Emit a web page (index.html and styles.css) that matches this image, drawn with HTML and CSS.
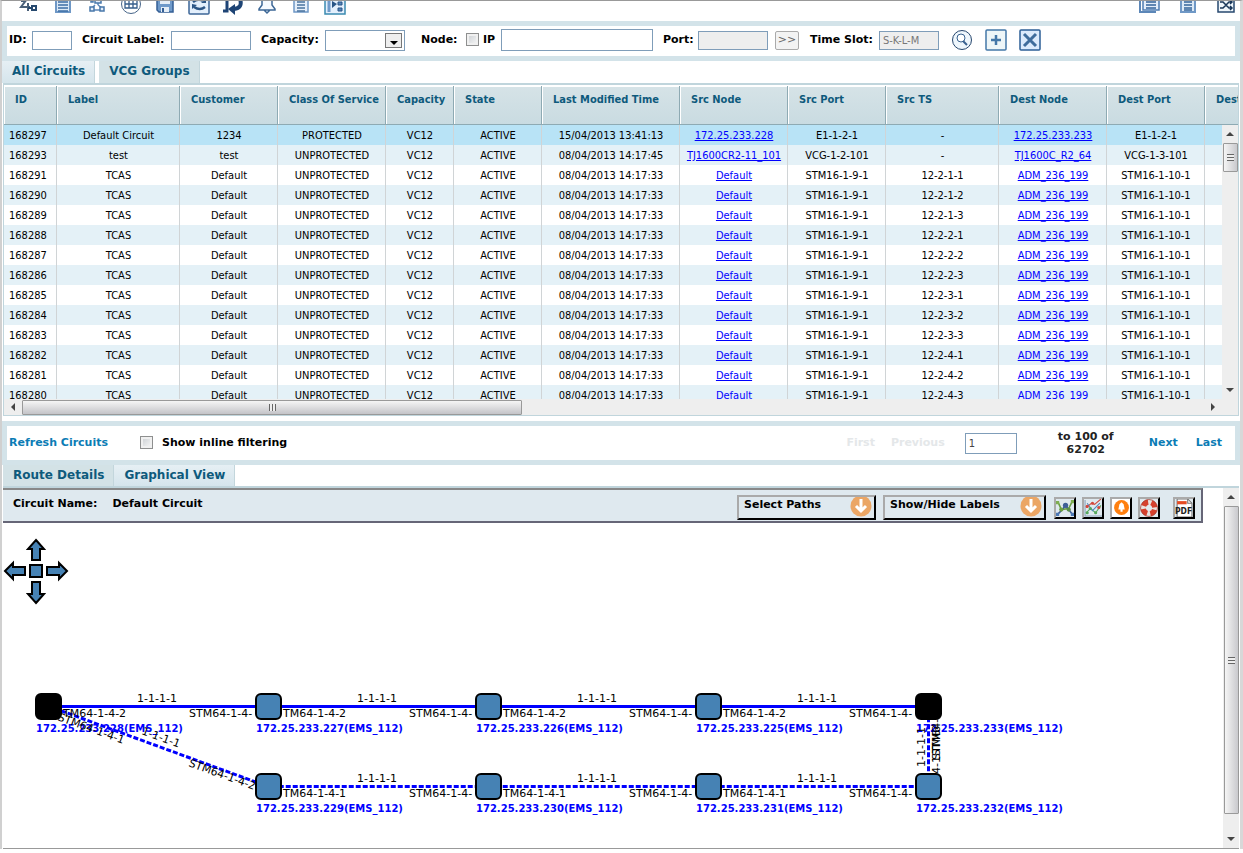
FILE: index.html
```
<!DOCTYPE html>
<html lang="en">
<head>
<meta charset="utf-8">
<title>Circuits</title>
<link rel="stylesheet" href="styles.css">
</head>
<body>
<div class="app">
  <nav class="toolbar" aria-label="Tools">
    <button class="tool" aria-label="Ports"><svg viewBox="0 0 22 16"><path d="M3 0H6L8 -2M9 -2L3 6H12M10 2V10" fill="none" stroke="#4a6078" stroke-width="2"/><path d="M14 5H18V9H14ZM10 7H14" fill="none" stroke="#27496f" stroke-width="2"/></svg></button>
    <button class="tool" aria-label="Circuit list"><svg viewBox="0 0 22 16"><path d="M4 -2H18V11H4Z" fill="#dce9f6" stroke="#6f98c6" stroke-width="2"/><path d="M6 1H16M6 4H16M6 7H16M6 10H16" stroke="#3d6ea5" stroke-width="1.5"/></svg></button>
    <button class="tool" aria-label="Topology"><svg viewBox="0 0 22 16"><path d="M12 0V4M9 4L6 7M12 4L16 7M7 9H14" fill="none" stroke="#5c87b8" stroke-width="1.5"/><path d="M9 -3H15V2H9ZM4 6H8V10H4ZM14 6H18V10H14ZM5 -1H7V1H5Z" fill="#e4eefa" stroke="#4878ab" stroke-width="1.5"/></svg></button>
    <button class="tool" aria-label="Table"><svg viewBox="0 0 22 16"><circle cx="11" cy="3" r="9.500" fill="#fff" stroke="#456488"/><path d="M5 -1H17V7H5ZM5 3H17M9 -1V7M13 -1V7" fill="none" stroke="#365d8b" stroke-width="1.300"/></svg></button>
    <button class="tool" aria-label="Save"><svg viewBox="0 0 22 16"><path d="M3 -2H19V11H5L3 9Z" fill="#6f9aca" stroke="#355f95" stroke-width="1.5"/><path d="M6 -1H16V3H6ZM7 6H15V11H7Z" fill="#e5eef7"/><path d="M9 7V11" stroke="#355f95" stroke-width="2"/></svg></button>
    <button class="tool" aria-label="Refresh"><svg viewBox="0 0 22 16"><rect x="1" y="-6" width="20" height="19" rx="1" fill="#e3effc" stroke="#3d6697" stroke-width="1.5"/><path d="M5 1Q10 -3 15 0M6 6Q12 10 17 6" fill="none" stroke="#2c5686" stroke-width="2.500"/><path d="M13 2L18 2L18 -2ZM4 3V8L9 4Z" fill="#2c5686"/></svg></button>
    <button class="tool" aria-label="Reroute"><svg viewBox="0 0 22 16"><path d="M1 10H5V-1" fill="none" stroke="#1e4475" stroke-width="3"/><path d="M18 -2Q21 7 12 8" fill="none" stroke="#1e4475" stroke-width="4"/><path d="M13 3V14L6 8Z" fill="#1e4475"/></svg></button>
    <button class="tool" aria-label="Alarms"><svg viewBox="0 0 22 16"><path d="M6 -2V4L3 8V9H19V8L16 4V-2M8 9L11 12L14 9" fill="#f6faff" stroke="#3c6796" stroke-width="1.5"/></svg></button>
    <button class="tool" aria-label="Log"><svg viewBox="0 0 22 16"><path d="M4 -2H18V11H4Z" fill="#e4eefa" stroke="#6f98c6" stroke-width="1.5"/><path d="M7 1H15M7 4H15M7 7H15M7 10H15" stroke="#48739f" stroke-width="1.5"/></svg></button>
    <button class="tool" aria-label="Tree"><svg viewBox="0 0 22 16"><rect x="1" y="-6" width="20" height="19" fill="#e3effc" stroke="#3a8ab0" stroke-width="1.5"/><path d="M5 -1V11" stroke="#6f9aca" stroke-width="3"/><path d="M8 0V7L13 3Z" fill="#285586"/><path d="M14 1H18V4H14ZM14 7H18V10H14Z" fill="#5484b9" stroke="#285586"/></svg></button>
    <span class="grow"></span>
    <button class="tool wide" aria-label="Copies"><svg viewBox="0 0 22 16"><path d="M1 -1V11H17" fill="none" stroke="#5c87b8" stroke-width="2"/><path d="M4 -2H20V9H4Z" fill="#e4eefa" stroke="#4f7db2" stroke-width="1.5"/><path d="M7 1H17M7 4H17M7 7H17" stroke="#33649a" stroke-width="1.5"/></svg></button>
    <button class="tool wide" aria-label="Report"><svg viewBox="0 0 22 16"><path d="M4 -2H18V11H4Z" fill="#dce9f6" stroke="#6f98c6" stroke-width="2"/><path d="M7 1H15M7 4H15M7 7H15M7 9H15" stroke="#33649a" stroke-width="1.5"/></svg></button>
    <button class="tool" aria-label="Shuffle"><svg viewBox="0 0 22 16"><path d="M3 -2V11H19V-2" fill="#eef5fb" stroke="#27486f" stroke-width="1.5"/><path d="M5 1H8L14 7H17M5 7H8L14 1H17M15 -1L17 1L15 3M15 5L17 7L15 9" fill="none" stroke="#173558" stroke-width="1.5"/></svg></button>
  </nav>

  <form class="panel filter">
    <label for="f-id" class="w-id">ID:</label><input id="f-id" class="field f-40" type="text">
    <label for="f-label" class="w-label">Circuit Label:</label><input id="f-label" class="field f-80" type="text">
    <label for="f-cap" class="w-cap">Capacity:</label>
    <span class="select-wrap"><select id="f-cap" class="field"><option></option></select><svg class="select-btn" viewBox="0 0 17 15" aria-hidden="true"><rect x=".5" y=".5" width="16" height="14" fill="#eee" stroke="#777"/><path d="M5 8H13L9 12Z" fill="#000"/></svg></span>
    <span class="w-node">Node:</span><input id="f-ip-on" class="check" type="checkbox"><label for="f-ip-on" class="w-ip">IP</label><input class="field f-ip" type="text" aria-label="IP address">
    <label for="f-port" class="w-port">Port:</label><input id="f-port" class="field f-70 off" type="text" disabled>
    <button type="button" class="more">&gt;&gt;</button>
    <label for="f-ts" class="w-ts">Time Slot:</label><input id="f-ts" class="field f-60 off" type="text" value="S-K-L-M" disabled>
    <button type="button" class="action" aria-label="Search"><svg viewBox="0 0 22 22"><circle cx="11" cy="11" r="9.500" fill="#eef6fc" stroke="#26466d"/><circle cx="10" cy="9" r="4" fill="#fff" stroke="#38618f"/><path d="M12 12L16 16" stroke="#38618f" stroke-width="2"/></svg></button>
    <button type="button" class="action" aria-label="Add"><svg viewBox="0 0 22 22"><rect x="1" y="1" width="20" height="20" rx="1" fill="#eef6f8" stroke="#4478a8" stroke-width="1.500"/><path d="M11 6V16M6 11H16" stroke="#4478a8" stroke-width="2.500"/></svg></button>
    <button type="button" class="action" aria-label="Clear"><svg viewBox="0 0 22 22"><rect x="1" y="1" width="20" height="20" rx="1" fill="#dceafc" stroke="#2d5f96" stroke-width="1.500"/><path d="M5 5L17 17M17 5L5 17" stroke="#3f6c9c" stroke-width="3"/></svg></button>
  </form>

  <div class="tabs" role="tablist">
    <button class="tab current" role="tab" aria-selected="true">All Circuits</button>
    <button class="tab spaced" role="tab" aria-selected="false">VCG Groups</button>
  </div>

  <section class="grid">
    <div class="grid-view">
      <table>
        <colgroup><col class="c53"><col class="c123"><col class="c98"><col class="c108"><col class="c68"><col class="c88"><col class="c138"><col class="c108"><col class="c98"><col class="c113"><col class="c108"><col class="c98"><col class="c113"></colgroup>
        <thead><tr><th>ID</th><th>Label</th><th>Customer</th><th>Class Of Service</th><th>Capacity</th><th>State</th><th>Last Modified Time</th><th>Src Node</th><th>Src Port</th><th>Src TS</th><th>Dest Node</th><th>Dest Port</th><th>Dest TS</th></tr></thead>
        <tbody>
        <tr class="selected"><td>168297</td><td>Default Circuit</td><td>1234</td><td>PROTECTED</td><td>VC12</td><td>ACTIVE</td><td>15/04/2013 13:41:13</td><td><a href="#">172.25.233.228</a></td><td>E1-1-2-1</td><td>-</td><td><a href="#">172.25.233.233</a></td><td>E1-1-2-1</td><td></td></tr>
        <tr><td>168293</td><td>test</td><td>test</td><td>UNPROTECTED</td><td>VC12</td><td>ACTIVE</td><td>08/04/2013 14:17:45</td><td><a href="#">TJ1600CR2-11_101</a></td><td>VCG-1-2-101</td><td>-</td><td><a href="#">TJ1600C_R2_64</a></td><td>VCG-1-3-101</td><td></td></tr>
        <tr><td>168291</td><td>TCAS</td><td>Default</td><td>UNPROTECTED</td><td>VC12</td><td>ACTIVE</td><td>08/04/2013 14:17:33</td><td><a href="#">Default</a></td><td>STM16-1-9-1</td><td>12-2-1-1</td><td><a href="#">ADM_236_199</a></td><td>STM16-1-10-1</td><td></td></tr>
        <tr><td>168290</td><td>TCAS</td><td>Default</td><td>UNPROTECTED</td><td>VC12</td><td>ACTIVE</td><td>08/04/2013 14:17:33</td><td><a href="#">Default</a></td><td>STM16-1-9-1</td><td>12-2-1-2</td><td><a href="#">ADM_236_199</a></td><td>STM16-1-10-1</td><td></td></tr>
        <tr><td>168289</td><td>TCAS</td><td>Default</td><td>UNPROTECTED</td><td>VC12</td><td>ACTIVE</td><td>08/04/2013 14:17:33</td><td><a href="#">Default</a></td><td>STM16-1-9-1</td><td>12-2-1-3</td><td><a href="#">ADM_236_199</a></td><td>STM16-1-10-1</td><td></td></tr>
        <tr><td>168288</td><td>TCAS</td><td>Default</td><td>UNPROTECTED</td><td>VC12</td><td>ACTIVE</td><td>08/04/2013 14:17:33</td><td><a href="#">Default</a></td><td>STM16-1-9-1</td><td>12-2-2-1</td><td><a href="#">ADM_236_199</a></td><td>STM16-1-10-1</td><td></td></tr>
        <tr><td>168287</td><td>TCAS</td><td>Default</td><td>UNPROTECTED</td><td>VC12</td><td>ACTIVE</td><td>08/04/2013 14:17:33</td><td><a href="#">Default</a></td><td>STM16-1-9-1</td><td>12-2-2-2</td><td><a href="#">ADM_236_199</a></td><td>STM16-1-10-1</td><td></td></tr>
        <tr><td>168286</td><td>TCAS</td><td>Default</td><td>UNPROTECTED</td><td>VC12</td><td>ACTIVE</td><td>08/04/2013 14:17:33</td><td><a href="#">Default</a></td><td>STM16-1-9-1</td><td>12-2-2-3</td><td><a href="#">ADM_236_199</a></td><td>STM16-1-10-1</td><td></td></tr>
        <tr><td>168285</td><td>TCAS</td><td>Default</td><td>UNPROTECTED</td><td>VC12</td><td>ACTIVE</td><td>08/04/2013 14:17:33</td><td><a href="#">Default</a></td><td>STM16-1-9-1</td><td>12-2-3-1</td><td><a href="#">ADM_236_199</a></td><td>STM16-1-10-1</td><td></td></tr>
        <tr><td>168284</td><td>TCAS</td><td>Default</td><td>UNPROTECTED</td><td>VC12</td><td>ACTIVE</td><td>08/04/2013 14:17:33</td><td><a href="#">Default</a></td><td>STM16-1-9-1</td><td>12-2-3-2</td><td><a href="#">ADM_236_199</a></td><td>STM16-1-10-1</td><td></td></tr>
        <tr><td>168283</td><td>TCAS</td><td>Default</td><td>UNPROTECTED</td><td>VC12</td><td>ACTIVE</td><td>08/04/2013 14:17:33</td><td><a href="#">Default</a></td><td>STM16-1-9-1</td><td>12-2-3-3</td><td><a href="#">ADM_236_199</a></td><td>STM16-1-10-1</td><td></td></tr>
        <tr><td>168282</td><td>TCAS</td><td>Default</td><td>UNPROTECTED</td><td>VC12</td><td>ACTIVE</td><td>08/04/2013 14:17:33</td><td><a href="#">Default</a></td><td>STM16-1-9-1</td><td>12-2-4-1</td><td><a href="#">ADM_236_199</a></td><td>STM16-1-10-1</td><td></td></tr>
        <tr><td>168281</td><td>TCAS</td><td>Default</td><td>UNPROTECTED</td><td>VC12</td><td>ACTIVE</td><td>08/04/2013 14:17:33</td><td><a href="#">Default</a></td><td>STM16-1-9-1</td><td>12-2-4-2</td><td><a href="#">ADM_236_199</a></td><td>STM16-1-10-1</td><td></td></tr>
        <tr><td>168280</td><td>TCAS</td><td>Default</td><td>UNPROTECTED</td><td>VC12</td><td>ACTIVE</td><td>08/04/2013 14:17:33</td><td><a href="#">Default</a></td><td>STM16-1-9-1</td><td>12-2-4-3</td><td><a href="#">ADM_236_199</a></td><td>STM16-1-10-1</td><td></td></tr>
        </tbody>
      </table>
      <div class="vbar over" aria-hidden="true"><i class="arrow up"></i><div class="vthumb short"><i class="grip"></i></div><span class="grow"></span><i class="arrow down"></i></div>
    </div>
    <div class="hbar" aria-hidden="true"><i class="arrow left"></i><div class="hthumb"><i class="grip upright"></i></div><span class="grow"></span><i class="arrow right"></i></div>
  </section>

  <div class="panel pager">
    <a class="link" href="#">Refresh Circuits</a>
    <input id="inline" class="check" type="checkbox"><label for="inline">Show inline filtering</label>
    <span class="grow"></span>
    <span class="faded">First</span><span class="faded previous">Previous</span>
    <input class="field page" type="text" value="1" aria-label="Page">
    <span class="range">to 100 of 62702</span>
    <a class="link next" href="#">Next</a><a class="link" href="#">Last</a>
  </div>

  <div class="tabs low" role="tablist">
    <button class="tab" role="tab" aria-selected="false">Route Details</button>
    <button class="tab current" role="tab" aria-selected="true">Graphical View</button>
  </div>

  <section class="graph">
    <div class="graph-main">
      <header class="graph-head">
        <span class="name">Circuit Name:</span><span class="name">Default Circuit</span>
        <span class="grow"></span>
        <button class="drop">Select Paths<svg viewBox="0 0 22 20"><circle cx="11" cy="9" r="10.500" fill="#eba665"/><path d="M11 2V13M6 9L11 14L16 9" fill="none" stroke="#fff" stroke-width="3"/></svg></button>
        <button class="drop labels">Show/Hide Labels<svg viewBox="0 0 22 20"><circle cx="11" cy="9" r="10.500" fill="#eba665"/><path d="M11 2V13M6 9L11 14L16 9" fill="none" stroke="#fff" stroke-width="3"/></svg></button>
        <button class="tile" aria-label="Fit"><svg viewBox="0 0 17 17"><path d="M2 3L5 10L12 9L15 3" fill="none" stroke="#6ca044" stroke-width="1.500"/><path d="M2 14L6 10L9 6L12 10L15 14" fill="none" stroke="#3e5f98" stroke-width="1.500"/><circle cx="9" cy="6" r="2.500" fill="#3e5f98"/><circle cx="5" cy="10" r="2" fill="#6ca044"/><circle cx="12" cy="10" r="2" fill="#5b8f4a"/><path d="M0 2H3V5H0ZM14 1H17V4H14Z" fill="#7fae52"/><path d="M0 13H3V16H0ZM14 13H17V16H14Z" fill="#4b79b5"/></svg></button>
        <button class="tile" aria-label="Chart"><svg viewBox="0 0 17 17"><path d="M1 1V16H17" fill="none" stroke="#8ba3b8"/><path d="M2 8L7 4L10 5L16 0" fill="none" stroke="#d3483c"/><path d="M2 13L6 9L11 13L16 6" fill="none" stroke="#56a85c"/><path d="M3 4L8 11L15 4" fill="none" stroke="#4f87bd"/><g fill="#d3483c"><circle cx="3" cy="7" r="1.500"/><circle cx="8" cy="4" r="1.500"/><circle cx="14" cy="8" r="1.500"/></g><g fill="#56a85c"><circle cx="6" cy="9" r="1.500"/><circle cx="11" cy="13" r="1.500"/><circle cx="3" cy="13" r="1.500"/></g></svg></button>
        <button class="tile white" aria-label="Alarms"><svg viewBox="0 0 17 17"><circle cx="9" cy="8" r="7" fill="#ff7f0e"/><path d="M9 3L11 5L12 10H6L7 5ZM8 10H10V12H8Z" fill="#fff"/></svg></button>
        <button class="tile" aria-label="Help"><svg viewBox="0 0 17 17"><circle cx="8.500" cy="8.500" r="5.500" fill="none" stroke="#e8e2df" stroke-width="5"/><circle cx="8.500" cy="8.500" r="5.500" fill="none" stroke="#d5402d" stroke-width="5" stroke-dasharray="5.500 3.139" stroke-dashoffset="7"/><circle cx="8.500" cy="8.500" r="8" fill="none" stroke="#a33c31" stroke-width=".7"/></svg></button>
        <button class="tile pdf" aria-label="Export PDF"><svg viewBox="0 0 17 17"><path d="M2 0H12L16 4V17H2Z" fill="#fff" stroke="#777"/><path d="M12 0V4H16" fill="none" stroke="#777"/><path d="M2 2H11V5H2Z" fill="#e54b22"/><text x="0" y="14" class="pdf-text">PDF</text></svg></button>
      </header>
      <svg class="canvas" role="img" aria-label="Circuit route">
        <g class="pan">
          <path d="M33 17L41 26H37V37H29V26H25ZM33 80L41 71H37V59H29V71H25ZM2 48L10 40V44H22V52H10V56ZM64 48L56 40V44H44V52H56V56ZM27 42H39V54H27Z"/>
        </g>
        <g class="route">
          <path d="M45 183.500H925"/>
          <path class="backup" d="M45 183L265 263.500H925.500V183"/>
        </g>
        <g class="nodes">
          <rect class="end" x="33" y="171" width="25" height="25" rx="5"/><rect x="253" y="171" width="25" height="25" rx="5"/><rect x="473" y="171" width="25" height="25" rx="5"/><rect x="693" y="171" width="25" height="25" rx="5"/><rect class="end" x="913" y="171" width="25" height="25" rx="5"/>
          <rect x="253" y="251" width="25" height="25" rx="5"/><rect x="473" y="251" width="25" height="25" rx="5"/><rect x="693" y="251" width="25" height="25" rx="5"/><rect x="913" y="251" width="25" height="25" rx="5"/>
        </g>
        <g class="ip">
          <text x="33" y="209">172.25.233.228(EMS_112)</text><text x="253" y="209">172.25.233.227(EMS_112)</text><text x="473" y="209">172.25.233.226(EMS_112)</text><text x="693" y="209">172.25.233.225(EMS_112)</text><text x="913" y="209">172.25.233.233(EMS_112)</text>
          <text x="253" y="289">172.25.233.229(EMS_112)</text><text x="473" y="289">172.25.233.230(EMS_112)</text><text x="693" y="289">172.25.233.231(EMS_112)</text><text x="913" y="289">172.25.233.232(EMS_112)</text>
        </g>
        <g class="port">
          <text x="134" y="179">1-1-1-1</text><text x="354" y="179">1-1-1-1</text><text x="574" y="179">1-1-1-1</text><text x="794" y="179">1-1-1-1</text>
          <text x="354" y="259">1-1-1-1</text><text x="574" y="259">1-1-1-1</text><text x="794" y="259">1-1-1-1</text>
          <text x="60" y="194">TM64-1-4-2</text><text x="280" y="194">TM64-1-4-2</text><text x="500" y="194">TM64-1-4-2</text><text x="720" y="194">TM64-1-4-2</text>
          <text x="186" y="194">STM64-1-4-</text><text x="406" y="194">STM64-1-4-</text><text x="626" y="194">STM64-1-4-</text><text x="846" y="194">STM64-1-4-</text>
          <text x="280" y="274">TM64-1-4-1</text><text x="500" y="274">TM64-1-4-1</text><text x="720" y="274">TM64-1-4-1</text>
          <text x="406" y="274">STM64-1-4-</text><text x="626" y="274">STM64-1-4-</text><text x="846" y="274">STM64-1-4-</text>
          <text transform="translate(54 197) rotate(20)">STM64-1-4-1</text><text transform="translate(138 211) rotate(20)">1-1-1-1</text><text transform="translate(185 243) rotate(20)">STM64-1-4-2</text>
          <text transform="translate(922 244) rotate(-90)">1-1-1-1</text><text transform="translate(937 237) rotate(-90)">STM64-</text><text transform="translate(937 251) rotate(-90)">4-1STM6</text>
        </g>
      </svg>
    </div>
    <div class="vbar side" aria-hidden="true"><i class="arrow up"></i><div class="vthumb"><i class="grip"></i></div><i class="arrow down"></i></div>
  </section>
</div>
</body>
</html>
```
FILE: styles.css
```
* { box-sizing: border-box; }
body {
  margin: 0;
  background: #fff;
  color: #000;
  font: bold 11px/14px "DejaVu Sans", Verdana, sans-serif;
}
button, input, select { font: inherit; margin: 0; }
button { padding: 0; border: 0; background: none; color: inherit; }
svg { display: block; }
.app {
  border-top: 1px solid #999;
  border-left: 2px solid #d0d0d0;
  border-right: 3px solid #d8d8d8;
  overflow: hidden;
}
.grow { flex: 1; }

.toolbar { display: flex; height: 20px; padding: 0 3px 0 16px; gap: 12px; overflow: hidden; }
.tool { width: 22px; height: 16px; flex: none; }
.tool svg { width: 22px; height: 16px; }
.wide { margin-right: 4px; }

.panel {
  display: flex;
  align-items: center;
  border: 5px solid #d3e3e9;
  white-space: nowrap;
}
.filter { height: 40px; padding: 0 2px 2px; }
.field {
  height: 19px;
  padding: 0 3px;
  border: 1px solid #7f9db9;
  border-radius: 0;
  background: #fff;
  color: #444;
  font: 11px/14px "DejaVu Sans Condensed", Tahoma, sans-serif;
}
.off { background: #eee; color: #777; }
.f-40 { width: 40px; }
.f-60 { width: 60px; }
.f-70 { width: 70px; }
.f-80 { width: 80px; }
.f-ip { width: 152px; height: 22px; }
.w-id { width: 23px; }
.w-label { width: 99px; padding-left: 10px; }
.w-cap { width: 74px; padding-left: 10px; }
.w-node { width: 61px; padding-left: 16px; }
.w-ip { width: 22px; padding-left: 4px; }
.w-port { width: 45px; padding-left: 10px; }
.w-ts { width: 80px; padding-left: 11px; }
.select-wrap { position: relative; width: 80px; height: 21px; }
.select-wrap select { appearance: none; width: 100%; height: 21px; display: block; }
.select-btn { position: absolute; right: 3px; top: 3px; width: 17px; height: 15px; pointer-events: none; }
.check {
  appearance: none;
  width: 13px;
  height: 13px;
  border: 1px solid #8e8f8f;
  background: linear-gradient(135deg, #c8ccd0, #fafafa);
  box-shadow: inset 0 0 0 2px #f0f0f0;
}
.filter .check { margin-bottom: 2px; }
.more {
  width: 24px;
  height: 19px;
  margin-left: 7px;
  border: 1px solid #aaa;
  border-radius: 2px;
  background: #f3f3f3;
  color: #666;
  font: 11px/14px "DejaVu Sans", sans-serif;
}
.action { width: 22px; height: 22px; margin-left: 12px; }

.tabs { display: flex; height: 22px; }
.tab {
  padding: 0 9px 2px 10px;
  border-right: 1px solid #c3d6dc;
  background: #d3e2e6;
  color: #0e5a7c;
  font-size: 12px;
}
.current { background: linear-gradient(#e6eff4, #d5e5ec); }
.spaced { margin-left: 4px; }
.low { height: 21px; padding-left: 1px; }

.grid { margin: 0 1px 5px; border: 1px solid #c0d5dc; border-top-width: 2px; }
.grid-view { position: relative; height: 314px; padding-top: 1px; overflow: hidden; }
table {
  width: 1314px;
  table-layout: fixed;
  border-collapse: separate;
  border-spacing: 0;
  font: 11px/14px "DejaVu Sans Condensed", Tahoma, sans-serif;
}
.c53 { width: 53px; } .c68 { width: 68px; } .c88 { width: 88px; } .c98 { width: 98px; }
.c108 { width: 108px; } .c113 { width: 113px; } .c123 { width: 123px; } .c138 { width: 138px; }
th {
  height: 39px;
  padding: 7px 0 0 11px;
  vertical-align: top;
  text-align: left;
  white-space: nowrap;
  color: #0e5a7c;
  border: solid #8eaab3;
  border-width: 0 1px 1px 0;
  box-shadow: inset 1px 1px #fff;
  background: linear-gradient(#d6e3e7, #c9dbe1);
}
td {
  height: 20px;
  padding: 2px 0 0 1px;
  text-align: center;
  white-space: nowrap;
  border-right: 1px solid #d0d4d6;
}
td:first-child { padding-left: 5px; text-align: left; }
tr:nth-child(even) td { background: #e4f1f7; }
tr.selected td { background: #b8e3f6; }
td a { color: #00f; }

.vbar { display: flex; flex-direction: column; width: 16px; background: #eee; align-items: center; }
.over { position: absolute; right: 0; top: 40px; bottom: 0; }
.vthumb, .hthumb { display: flex; align-items: center; justify-content: center; border: 1px solid #999; border-radius: 1px; }
.vthumb { flex: 1; width: 15px; background: linear-gradient(90deg, #f5f5f5, #c9c9cd); }
.side .vthumb { margin-bottom: 16px; }
.short { flex: none; height: 29px; }
.hbar { display: flex; align-items: center; height: 16px; background: #eee; }
.hthumb { width: 500px; height: 15px; background: linear-gradient(#f5f5f5, #c4c4c8); }
.hbar .right { margin-right: 16px; }
.grip { width: 7px; height: 7px; background: repeating-linear-gradient(#666 0 1px, #eee 1px 3px); }
.upright { background: repeating-linear-gradient(90deg, #666 0 1px, #eee 1px 3px); }
.arrow { flex: none; width: 18px; height: 18px; display: flex; align-items: center; justify-content: center; }
.arrow::before { content: ""; border: 4px solid transparent; }
.up::before { border-top: 0; border-bottom-color: #444; }
.down::before { border-bottom: 0; border-top-color: #444; }
.left::before { border-left: 0; border-right-color: #444; }
.right::before { border-right: 0; border-left-color: #444; }

.pager { min-height: 44px; padding: 0 13px 0 2px; }
.link { color: #0b7cb5; text-decoration: none; }
.pager .check { margin: 0 9px 2px 32px; }
.faded { margin-right: 16px; color: #e4e7e9; }
.previous { margin-right: 15px; }
.page { width: 52px; height: 21px; margin: 0 29px 0 5px; }
.range { width: 80px; margin-right: 23px; color: #222; text-align: center; white-space: normal; line-height: 13px; }
.next { margin-right: 18px; }

.graph { display: flex; height: 363px; margin: 0 1px; border-top: 2px solid #c0d5dc; border-bottom: 1px solid #999; }
.graph-main { flex: 1; min-width: 0; }
.graph-head {
  display: flex;
  height: 35px;
  margin-right: 20px;
  padding: 5px 6px 0 10px;
  border: solid;
  border-width: 2px 2px 2px 0;
  border-color: #888 #667 #667 #888;
  background: #dfe9ef;
}
.name { margin-right: 15px; padding-top: 2px; }
.drop {
  display: flex;
  justify-content: space-between;
  width: 139px;
  height: 25px;
  margin-right: 7px;
  padding: 1px 2px 0 5px;
  border: 2px solid;
  border-color: #aaa #000 #000 #aaa;
  background: #dfe9ef;
}
.drop svg { width: 22px; height: 20px; margin-top: -1px; }
.labels { width: 163px; margin-right: 8px; }
.tile {
  width: 22px;
  height: 22px;
  margin: 2px 6px 0 0;
  border: 2px solid;
  border-color: #aaa #000 #000 #aaa;
  background: #dfe9ef;
}
.tile svg { width: 18px; height: 18px; }
.white { background: #fff; }
.pdf { margin: 2px 0 0 7px; }
.pdf-text { font: bold 8px "DejaVu Sans Condensed", sans-serif; fill: #222; }

.canvas { width: 100%; height: 325px; }
.pan path { fill: #4682b4; stroke: #000; stroke-width: 2; }
.route path { fill: none; stroke: #00f; stroke-width: 3; }
.route .backup { stroke-dasharray: 5 2; }
.nodes rect { fill: #4682b4; stroke: #000; stroke-width: 2; }
.nodes .end { fill: #000; }
.canvas .port text { font: 11px "DejaVu Sans", Verdana, sans-serif; }
.canvas .ip text { font: bold 10px "DejaVu Sans", Verdana, sans-serif; fill: #00f; }
```
